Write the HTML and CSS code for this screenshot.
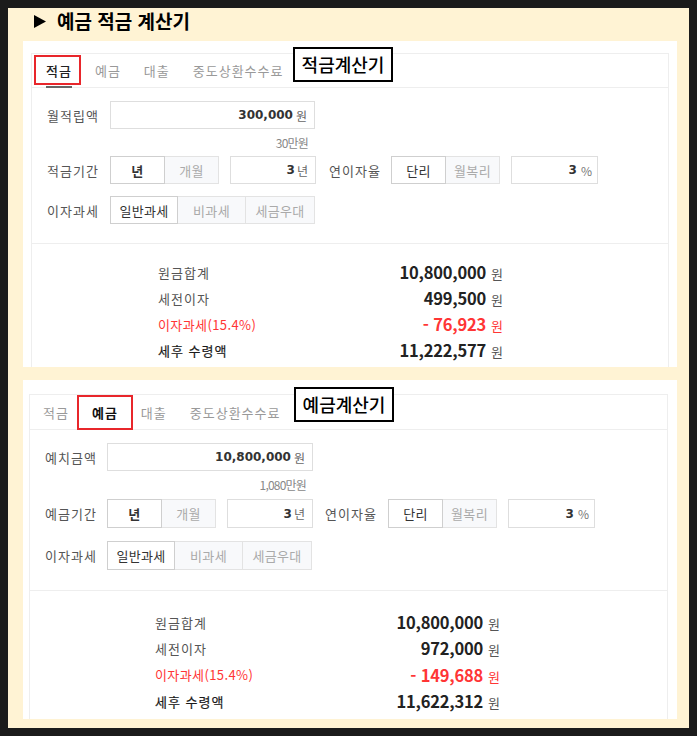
FILE: index.html
```html
<!DOCTYPE html>
<html lang="ko">
<head>
<meta charset="utf-8">
<title>예금 적금 계산기</title>
<link rel="stylesheet" href="styles.css">
</head>
<body>
<div class="panel">
  <h1 class="title">
    <svg class="title-icon" width="12" height="13" viewBox="0 0 12 13"><polygon points="0,0 12,6.5 0,13" fill="#000"/></svg>
    <span>예금 적금 계산기</span>
  </h1>

  <section class="card card--saving">
    <div class="callout">적금계산기</div>
    <div class="calc">
      <nav class="tabs">
        <span class="tab tab--active tab--marked">적금</span>
        <span class="tab">예금</span>
        <span class="tab">대출</span>
        <span class="tab">중도상환수수료</span>
      </nav>
      <div class="form">
        <div class="row">
          <span class="label">월적립액</span>
          <div class="field field--wide"><b class="num">300,000</b><span class="unit">원</span></div>
        </div>
        <div class="hint">30만원</div>
        <div class="row">
          <span class="label">적금기간</span>
          <div class="seg">
            <span class="seg-btn seg-btn--on seg-btn--bold">년</span>
            <span class="seg-btn">개월</span>
          </div>
          <div class="field field--short"><b class="num">3</b><span class="unit unit--tight">년</span></div>
          <span class="label label--inline">연이자율</span>
          <div class="seg">
            <span class="seg-btn seg-btn--on">단리</span>
            <span class="seg-btn">월복리</span>
          </div>
          <div class="field field--short field--rate"><b class="num">3</b><span class="unit unit--pct">%</span></div>
        </div>
        <div class="row">
          <span class="label">이자과세</span>
          <div class="seg seg--three">
            <span class="seg-btn seg-btn--on">일반과세</span>
            <span class="seg-btn">비과세</span>
            <span class="seg-btn">세금우대</span>
          </div>
        </div>
      </div>
      <div class="results">
        <span class="r-label">원금합계</span><span class="r-value"><b>10,800,000</b><span class="r-unit">원</span></span>
        <span class="r-label">세전이자</span><span class="r-value"><b>499,500</b><span class="r-unit">원</span></span>
        <span class="r-label r-label--red">이자과세(15.4%)</span><span class="r-value r-value--red"><b>- 76,923</b><span class="r-unit">원</span></span>
        <span class="r-label r-label--strong">세후 수령액</span><span class="r-value"><b>11,222,577</b><span class="r-unit">원</span></span>
      </div>
    </div>
  </section>

  <section class="card card--deposit">
    <div class="callout">예금계산기</div>
    <div class="calc">
      <nav class="tabs">
        <span class="tab">적금</span>
        <span class="tab tab--active tab--marked tab--bold">예금</span>
        <span class="tab">대출</span>
        <span class="tab">중도상환수수료</span>
      </nav>
      <div class="form">
        <div class="row">
          <span class="label">예치금액</span>
          <div class="field field--wide"><b class="num">10,800,000</b><span class="unit">원</span></div>
        </div>
        <div class="hint">1,080만원</div>
        <div class="row">
          <span class="label">예금기간</span>
          <div class="seg">
            <span class="seg-btn seg-btn--on seg-btn--bold">년</span>
            <span class="seg-btn">개월</span>
          </div>
          <div class="field field--short"><b class="num">3</b><span class="unit unit--tight">년</span></div>
          <span class="label label--inline">연이자율</span>
          <div class="seg">
            <span class="seg-btn seg-btn--on">단리</span>
            <span class="seg-btn">월복리</span>
          </div>
          <div class="field field--short field--rate"><b class="num">3</b><span class="unit unit--pct">%</span></div>
        </div>
        <div class="row">
          <span class="label">이자과세</span>
          <div class="seg seg--three">
            <span class="seg-btn seg-btn--on">일반과세</span>
            <span class="seg-btn">비과세</span>
            <span class="seg-btn">세금우대</span>
          </div>
        </div>
      </div>
      <div class="results">
        <span class="r-label">원금합계</span><span class="r-value"><b>10,800,000</b><span class="r-unit">원</span></span>
        <span class="r-label">세전이자</span><span class="r-value"><b>972,000</b><span class="r-unit">원</span></span>
        <span class="r-label r-label--red">이자과세(15.4%)</span><span class="r-value r-value--red"><b>- 149,688</b><span class="r-unit">원</span></span>
        <span class="r-label r-label--strong">세후 수령액</span><span class="r-value"><b>11,622,312</b><span class="r-unit">원</span></span>
      </div>
    </div>
  </section>
</div>
</body>
</html>
```

FILE: styles.css
```css
* { box-sizing: border-box; }

html, body {
  margin: 0;
  padding: 0;
  background: #1b1b1b;
}

body {
  font-family: "Noto Sans CJK KR", "Noto Sans", sans-serif;
  color: #333;
}

.panel {
  margin: 8px;
  width: 681px;
  height: 720px;
  background: #fff3d4;
  padding: 0 12px 0 15px;
  overflow: hidden;
}

.title {
  display: flex;
  align-items: center;
  gap: 11px;
  height: 26px;
  margin: 0 0 7px;
  padding-left: 11px;
  font-size: 19px;
  font-weight: 700;
  color: #000;
  line-height: 26px;
}

.title-icon { display: block; flex: none; }

.card {
  position: relative;
  background: #fff;
  height: 326px;
  padding: 12px 8px 0 8px;
}

.card--deposit {
  height: 339px;
  margin-top: 13px;
  padding: 14px 9px 0 6px;
}

.callout {
  position: absolute;
  left: 270px;
  top: 6px;
  width: 100px;
  height: 35px;
  border: 2px solid #000;
  background: #fff;
  color: #000;
  font-size: 18px;
  font-weight: 500;
  line-height: 30px;
  text-align: center;
  z-index: 3;
}

.card--deposit .callout { left: 271px; top: 7px; }

.calc {
  height: 100%;
  border: 1px solid #eeeeee;
  border-bottom: none;
}

.tabs {
  display: flex;
  gap: 23px;
  height: 34px;
  padding-left: 14px;
  border-bottom: 1px solid #eeeeee;
}

.card--deposit .tabs { height: 35px; padding-left: 13px; }

.tab {
  position: relative;
  display: flex;
  align-items: center;
  font-size: 13px;
  color: #999;
  letter-spacing: 1px;
}

.tab--active {
  color: #222;
  font-weight: 500;
  border-bottom: 2px solid #666;
  margin-bottom: -1px;
  padding-top: 1px;
}

.card--deposit .tab--active {
  border-bottom: none;
  margin-bottom: 0;
  padding-top: 0;
}

.tab--bold { font-weight: 700; color: #111; }

.tab--marked::after {
  content: "";
  position: absolute;
  left: -12px;
  right: -9px;
  top: 1px;
  bottom: 1px;
  border: 2px solid #e8262b;
}

.card--deposit .tab--marked::after {
  left: -15px;
  right: -15px;
  top: 0;
  bottom: -1px;
}

.form {
  padding: 13px 0 19px 15px;
  border-bottom: 1px solid #eeeeee;
}

.card--deposit .form { padding: 13px 0 20px 15px; }

.row {
  display: flex;
  align-items: stretch;
  height: 28px;
}

.row + .row { margin-top: 12px; }
.card--deposit .row { height: 29px; }
.card--deposit .row + .row { margin-top: 13px; }
.card--deposit .row:first-child { height: 28px; }

.label {
  flex: none;
  width: 63px;
  display: flex;
  align-items: center;
  font-size: 13px;
  color: #555;
  letter-spacing: 1px;
}

.card--deposit .label { width: 62px; }

.label--inline { width: 52px; margin-left: 13px; margin-right: 10px; }
.card--deposit .label.label--inline { width: 52px; margin-left: 12px; margin-right: 11px; }

.field {
  flex: none;
  display: flex;
  align-items: center;
  justify-content: flex-end;
  border: 1px solid #dedede;
  background: #fff;
  padding-right: 7px;
}

.field--wide { width: 205px; }
.card--deposit .field--wide { width: 206px; }
.field--short { width: 86px; margin-left: 11px; }
.field--rate { width: 87px; padding-right: 5px; }

.num {
  font-family: "DejaVu Sans", sans-serif;
  font-weight: 700;
  font-size: 12px;
  color: #333;
}

.unit {
  margin-left: 3px;
  font-size: 12px;
  color: #666;
}

.unit--tight { margin-left: 2px; }
.unit--pct { margin-left: 4px; font-size: 12px; color: #777; }

.hint {
  width: 268px;
  height: 27px;
  line-height: 27px;
  text-align: right;
  padding-right: 7px;
  font-size: 12px;
  letter-spacing: -0.8px;
  color: #888;
}

.card--deposit .hint { height: 28px; line-height: 28px; }

.seg { display: flex; flex: none; }

.seg-btn {
  display: flex;
  align-items: center;
  justify-content: center;
  width: 54px;
  border: 1px solid #e3e3e3;
  background: #f8f9fb;
  color: #aaa;
  font-size: 13px;
  letter-spacing: 0.3px;
}

.seg-btn:first-child { width: 55px; }
.seg-btn + .seg-btn { border-left: none; }

.seg-btn--on {
  background: #fff;
  color: #333;
  border-color: #cfcfcf;
}

.seg-btn--bold { font-weight: 700; }

.seg--three .seg-btn { width: 68px; }
.seg--three .seg-btn:last-child { width: 69px; }

.results {
  display: grid;
  grid-template-columns: 1fr auto;
  width: 471px;
  padding: 15px 0 0 126px;
  grid-auto-rows: 26px;
  align-items: center;
}

.card--deposit .results {
  padding: 18px 0 0 125px;
  width: 470px;
  grid-auto-rows: 26.3px;
}

.r-label {
  font-size: 13px;
  color: #555;
  letter-spacing: 1px;
}

.r-label--red { color: #ff3535; letter-spacing: 0.4px; }
.r-label--strong { color: #1a1a1a; font-weight: 400; -webkit-text-stroke: 0.2px #1a1a1a; }

.r-value {
  display: flex;
  align-items: baseline;
  justify-content: flex-end;
  color: #222;
}

.r-value b {
  font-size: 16.5px;
  font-weight: 700;
  letter-spacing: -0.2px;
}

.r-value--red { color: #ff3535; }

.r-unit {
  margin-left: 5px;
  font-size: 13px;
  color: #555;
}

.r-value--red .r-unit { color: #ff3535; }
```
